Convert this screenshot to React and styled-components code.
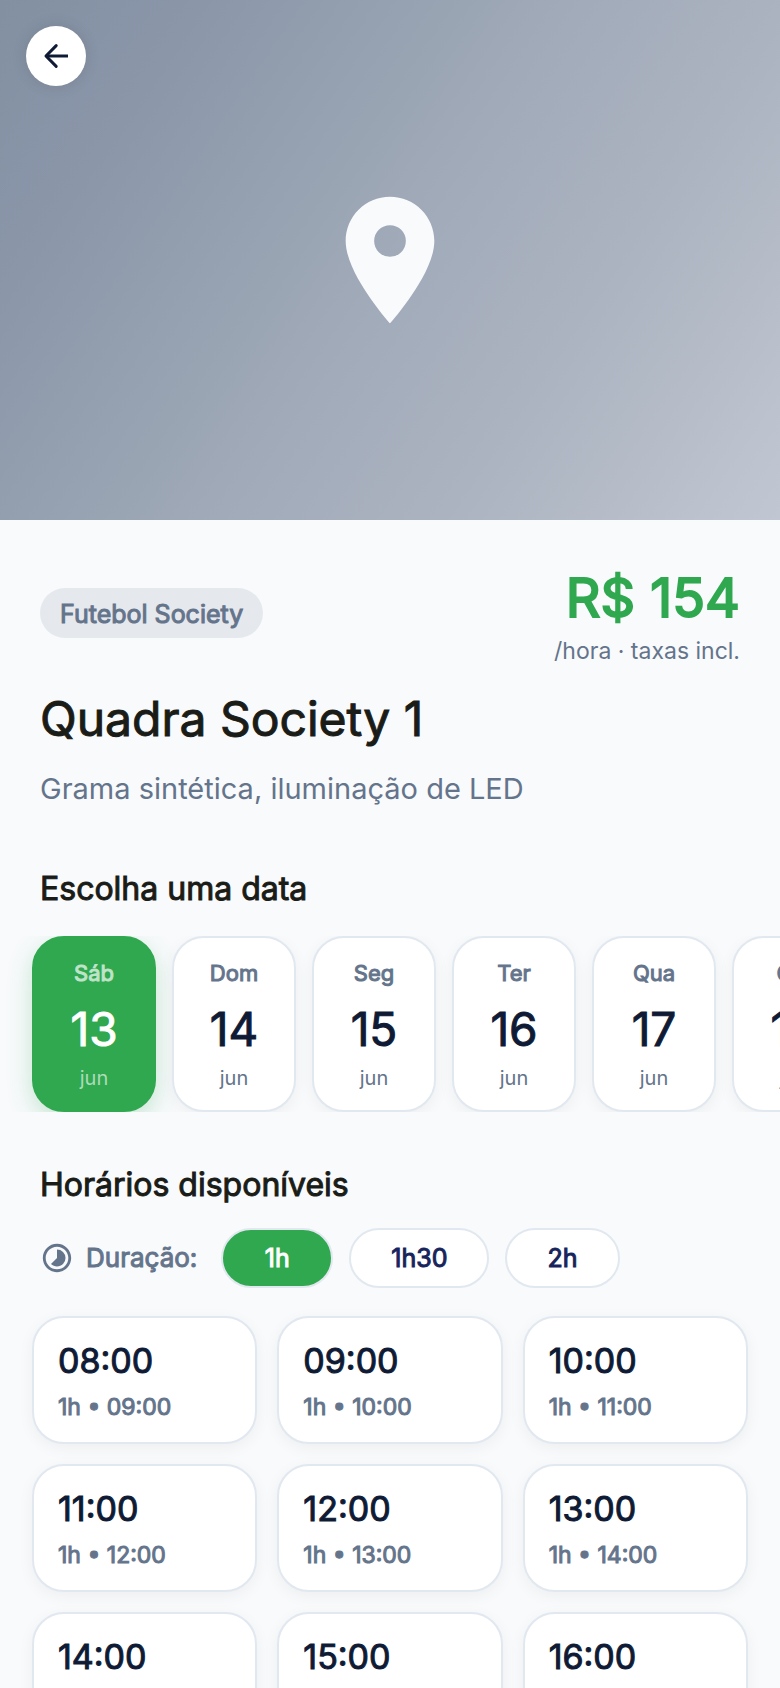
import React, { useState } from "react";
import styled, { createGlobalStyle, css } from "styled-components";
import { MdLocationOn, MdTimelapse } from "react-icons/md";

const GlobalStyle = createGlobalStyle`
  * {
    box-sizing: border-box;
  }

  body {
    margin: 0;
    background: #f8fafc;
    color: #0f1b35;
    font-family: Inter, "Liberation Sans", sans-serif;
  }

  button {
    font-family: inherit;
    color: inherit;
    cursor: pointer;
  }
`;

// heavier face drawn over the regular widths
const strong = css`
  -webkit-text-stroke: 1px currentColor;
`;

const Screen = styled.div`
  height: 100vh;
  overflow-y: auto;
  scrollbar-width: none;
`;

const Hero = styled.header`
  position: relative;
  display: flex;
  align-items: center;
  justify-content: center;
  height: 520px;
  background: linear-gradient(124deg, #8290a2 0%, #8b96a9 18%, #96a2b1 36%, #a2abba 52%, #abb3c0 70%, #c1c7d2 100%);
  color: #f9fafc;
`;

const BackButton = styled.button`
  position: absolute;
  top: 26px;
  left: 26px;
  display: flex;
  align-items: center;
  justify-content: center;
  width: 60px;
  height: 60px;
  padding: 0;
  border: none;
  border-radius: 50%;
  background: #fff;
  color: #0f1b35;
  box-shadow: 0 0 16px rgba(0, 0, 0, 0.1);
`;

const Info = styled.section`
  display: flex;
  flex-direction: column;
  gap: 20px;
  padding: 40px 40px 0;
`;

const InfoTop = styled.div`
  display: flex;
  align-items: center;
  justify-content: space-between;
`;

const Chip = styled.span`
  ${strong}
  padding: 10px 20px 8px;
  border-radius: 25px;
  background: #e5e8ed;
  color: #64748b;
  font-size: 25px;
  line-height: 32px;
`;

const PriceBlock = styled.div`
  text-align: right;
`;

const Price = styled.div`
  -webkit-text-stroke: 2px currentColor;
  color: #2fa84f;
  font-size: 54px;
  line-height: 76px;
`;

const PriceNote = styled.div`
  color: #64748b;
  font-size: 23px;
  line-height: 30px;
`;

const Title = styled.h1`
  ${strong}
  margin: 0;
  color: #1a1c18;
  font-size: 48px;
  font-weight: 400;
  line-height: 66px;
`;

const Subtitle = styled.p`
  margin: 0;
  color: #64748b;
  font-size: 29px;
  line-height: 34px;
`;

const SectionTitle = styled.h2`
  ${strong}
  margin: 0 40px;
  color: #1a1c18;
  font-size: 32px;
  font-weight: 400;
  line-height: 46px;
`;

const DateSection = styled.section`
  display: flex;
  flex-direction: column;
  gap: 24px;
  margin-top: 60px;
`;

const DateRow = styled.div`
  display: flex;
  gap: 16px;
  padding: 0 32px;
  overflow-x: auto;
  scrollbar-width: none;
`;

const DateCard = styled.button`
  flex: none;
  display: flex;
  flex-direction: column;
  align-items: center;
  width: 124px;
  height: 176px;
  padding: 22px 0;
  border: 2px solid ${({ $active }) => ($active ? "#2fa84f" : "#e2e8f0")};
  border-radius: 32px;
  background: ${({ $active }) => ($active ? "#2fa84f" : "#fff")};
  color: ${({ $active }) => ($active ? "#fff" : "#0f1b35")};
  box-shadow: ${({ $active }) =>
    $active ? "0 8px 24px rgba(47, 168, 79, 0.25)" : "0 4px 16px rgba(0, 0, 0, 0.05)"};
`;

const Weekday = styled.span`
  ${strong}
  color: ${({ $active }) => ($active ? "#bfe4c9" : "#64748b")};
  font-size: 22px;
  line-height: 26px;
`;

const DayNumber = styled.span`
  ${strong}
  margin: 10px 0 6px;
  font-size: 46px;
  line-height: 66px;
`;

const Month = styled.span`
  color: ${({ $active }) => ($active ? "#abdcb8" : "#64748b")};
  font-size: 20px;
  line-height: 20px;
`;

const TimeSection = styled.section`
  margin-top: 50px;
  padding-bottom: 40px;
`;

const DurationRow = styled.div`
  display: flex;
  align-items: center;
  gap: 16px;
  margin: 20px 40px 28px;
`;

const DurationLabel = styled.span`
  ${strong}
  display: flex;
  align-items: center;
  gap: 12px;
  margin-right: 8px;
  color: #64748b;
  font-size: 26px;
  line-height: 32px;
`;

const DurationButton = styled.button`
  ${strong}
  min-width: 112px;
  height: 60px;
  padding: 0 40px;
  border: 2px solid #e2e8f0;
  border-radius: 30px;
  background: ${({ $active }) => ($active ? "#2fa84f" : "#fff")};
  color: ${({ $active }) => ($active ? "#fff" : "#17245c")};
  font-size: 25px;
  line-height: 32px;
`;

const SlotGrid = styled.div`
  display: grid;
  grid-template-columns: repeat(3, 1fr);
  gap: 20px;
  padding: 0 32px;
`;

const Slot = styled.button`
  display: flex;
  flex-direction: column;
  gap: 12px;
  padding: 22px 24px;
  border: 2px solid #e2e8f0;
  border-radius: 32px;
  background: #fff;
  text-align: left;
  box-shadow: 0 4px 16px rgba(0, 0, 0, 0.05);
`;

const SlotTime = styled.span`
  ${strong}
  font-size: 34px;
  line-height: 42px;
`;

const SlotNote = styled.span`
  ${strong}
  color: #64748b;
  font-size: 23px;
  line-height: 26px;
`;

const BackArrow = () => (
  <svg width="28" height="28" viewBox="0 0 28 28" fill="none" stroke="currentColor" strokeWidth="3" aria-hidden="true">
    <path d="M26 14H4" />
    <path d="M14.2 3.6L4 14l10.2 10.4" strokeLinejoin="round" strokeLinecap="round" />
  </svg>
);

const days = [
  { weekday: "Sáb", day: 13 },
  { weekday: "Dom", day: 14 },
  { weekday: "Seg", day: 15 },
  { weekday: "Ter", day: 16 },
  { weekday: "Qua", day: 17 },
  { weekday: "Qui", day: 18 },
];

const durations = [
  { label: "1h", minutes: 60 },
  { label: "1h30", minutes: 90 },
  { label: "2h", minutes: 120 },
];

const hours = [8, 9, 10, 11, 12, 13, 14, 15, 16];

const formatTime = (minutes) =>
  `${String(Math.floor(minutes / 60)).padStart(2, "0")}:${String(minutes % 60).padStart(2, "0")}`;

const App = () => {
  const [day, setDay] = useState(13);
  const [duration, setDuration] = useState(durations[0]);

  return (
    <>
      <GlobalStyle />
      <Screen>
        <Hero>
          <BackButton type="button" aria-label="Voltar">
            <BackArrow />
          </BackButton>
          <MdLocationOn size={152} />
        </Hero>

        <Info>
          <InfoTop>
            <Chip>Futebol Society</Chip>
            <PriceBlock>
              <Price>R$ 154</Price>
              <PriceNote>/hora · taxas incl.</PriceNote>
            </PriceBlock>
          </InfoTop>
          <Title>Quadra Society 1</Title>
          <Subtitle>Grama sintética, iluminação de LED</Subtitle>
        </Info>

        <DateSection>
          <SectionTitle>Escolha uma data</SectionTitle>
          <DateRow>
            {days.map((item) => {
              const active = item.day === day;
              return (
                <DateCard
                  key={item.day}
                  type="button"
                  $active={active}
                  aria-pressed={active}
                  onClick={() => setDay(item.day)}
                >
                  <Weekday $active={active}>{item.weekday}</Weekday>
                  <DayNumber>{item.day}</DayNumber>
                  <Month $active={active}>jun</Month>
                </DateCard>
              );
            })}
          </DateRow>
        </DateSection>

        <TimeSection>
          <SectionTitle>Horários disponíveis</SectionTitle>
          <DurationRow>
            <DurationLabel>
              <MdTimelapse size={34} />
              Duração:
            </DurationLabel>
            {durations.map((item) => (
              <DurationButton
                key={item.label}
                type="button"
                $active={item === duration}
                aria-pressed={item === duration}
                onClick={() => setDuration(item)}
              >
                {item.label}
              </DurationButton>
            ))}
          </DurationRow>
          <SlotGrid>
            {hours.map((hour) => (
              <Slot key={hour} type="button">
                <SlotTime>{formatTime(hour * 60)}</SlotTime>
                <SlotNote>
                  {duration.label} • {formatTime(hour * 60 + duration.minutes)}
                </SlotNote>
              </Slot>
            ))}
          </SlotGrid>
        </TimeSection>
      </Screen>
    </>
  );
};

export default App;
